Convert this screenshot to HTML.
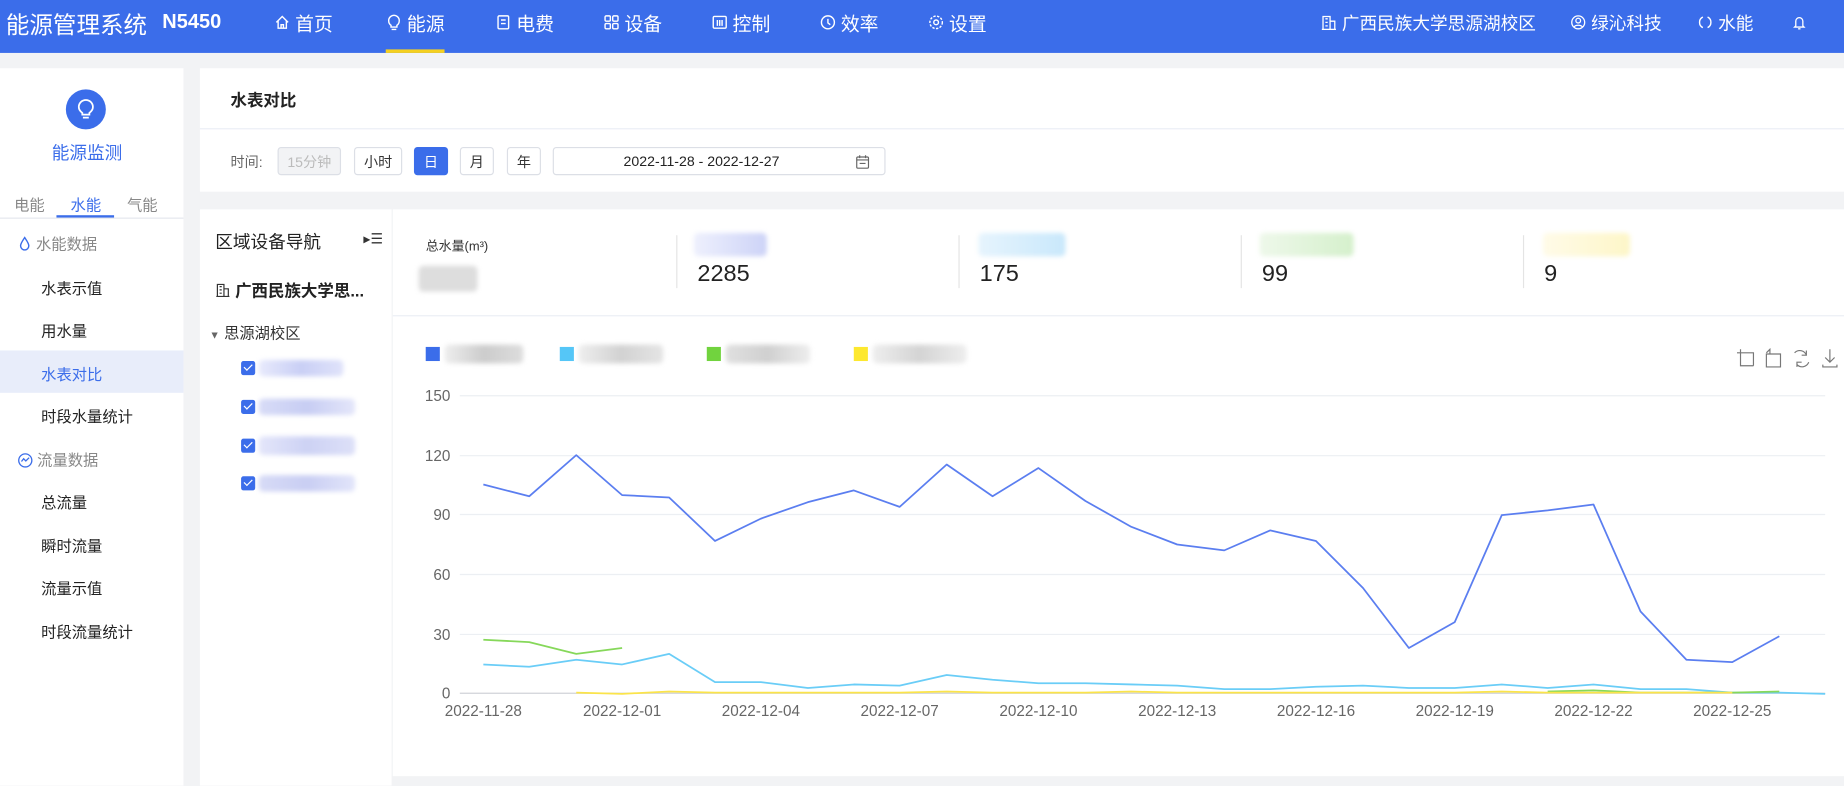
<!DOCTYPE html>
<html><head><meta charset="utf-8">
<style>
*{margin:0;padding:0;box-sizing:border-box}
html,body{width:1844px;height:786px;overflow:hidden;background:#f2f3f5}
body{font-family:"Liberation Sans","Noto Sans CJK SC",sans-serif;color:#333}
#w{position:absolute;left:0;top:0;width:1568px;height:668px;transform:scale(1.17602);transform-origin:0 0;background:#f2f3f5}
.a{position:absolute;white-space:nowrap}
.hd{position:absolute;left:0;top:0;width:1568px;height:45px;background:#3b6dea;color:#fff}
.nav{position:absolute;top:0;height:38px;font-size:16px;color:#fff;display:flex;align-items:center;gap:4px;white-space:nowrap}
.nav svg{width:14px;height:14px}
.card{position:absolute;background:#fff}
.menu{position:absolute;left:35px;font-size:13px;color:#222}
.btn{position:absolute;top:125px;height:24px;border:1px solid #dcdfe6;border-radius:3px;font-size:12px;display:flex;align-items:center;justify-content:center;color:#333;background:#fff}
.blur{position:absolute;filter:blur(2px);border-radius:4px}
.cb{position:absolute;left:205px;width:12px;height:12px;background:#3b6dea;border-radius:2px}
.cb:after{content:"";position:absolute;left:3.5px;top:1px;width:3px;height:6px;border:solid #fff;border-width:0 1.5px 1.5px 0;transform:rotate(45deg)}
.yl{position:absolute;right:1185px;font-size:13px;color:#666;width:40px;text-align:right}
.xl{position:absolute;top:597px;font-size:13px;color:#666;width:90px;text-align:center}
</style></head><body><div id="w">
<div class="hd">
 <div class="nav" style="left:5px;font-size:20px;">能源管理系统</div>
 <div class="nav" style="left:138px;font-size:17px;font-weight:bold">N5450</div>
 <div class="nav" style="left:233px"><svg viewBox="0 0 14 14" fill="none" stroke="#fff" stroke-width="1.2"><path d="M2 7L7 2l5 5M3.5 6v6h7V6M6 12V9h2v3"/></svg>首页</div>
 <div class="nav" style="left:328px"><svg viewBox="0 0 14 14" fill="none" stroke="#fff" stroke-width="1.2"><path d="M4.5 9.5C3 8.5 2.5 7 2.5 5.5a4.5 4.5 0 0 1 9 0c0 1.5-.5 3-2 4v1.5h-5zM5 13h4"/></svg>能源</div>
 <div class="a" style="left:328px;top:42px;width:50px;height:3px;background:#f5d020"></div>
 <div class="nav" style="left:421px"><svg viewBox="0 0 14 14" fill="none" stroke="#fff" stroke-width="1.2"><rect x="2.5" y="1.5" width="9" height="11" rx="1"/><path d="M5 5h4M5 8h4"/></svg>电费</div>
 <div class="nav" style="left:513px"><svg viewBox="0 0 14 14" fill="none" stroke="#fff" stroke-width="1.2"><rect x="1.5" y="1.5" width="4.5" height="4.5" rx="1"/><rect x="8" y="1.5" width="4.5" height="4.5" rx="1"/><rect x="1.5" y="8" width="4.5" height="4.5" rx="1"/><rect x="8" y="8" width="4.5" height="4.5" rx="1"/></svg>设备</div>
 <div class="nav" style="left:605px"><svg viewBox="0 0 14 14" fill="none" stroke="#fff" stroke-width="1.2"><rect x="1.5" y="2" width="11" height="10" rx="1"/><path d="M5 5v5M7 5v5M9 5v5"/></svg>控制</div>
 <div class="nav" style="left:697px"><svg viewBox="0 0 14 14" fill="none" stroke="#fff" stroke-width="1.2"><circle cx="7" cy="7" r="5.5"/><path d="M7 4v3.5l2 1.5"/></svg>效率</div>
 <div class="nav" style="left:789px"><svg viewBox="0 0 14 14" fill="none" stroke="#fff" stroke-width="1.2"><circle cx="7" cy="7" r="2"/><circle cx="7" cy="7" r="5.3" stroke-dasharray="2 1.2"/></svg>设置</div>
 <div class="nav" style="left:1123px;font-size:15px"><svg viewBox="0 0 14 14" fill="none" stroke="#fff" stroke-width="1.1"><path d="M2 13V2h6v11M8 6h4v7M1 13h12M4 4h2M4 7h2M4 10h2"/></svg>广西民族大学思源湖校区</div>
 <div class="nav" style="left:1335px;font-size:15px"><svg viewBox="0 0 14 14" fill="none" stroke="#fff" stroke-width="1.1"><circle cx="7" cy="7" r="5.5"/><circle cx="7" cy="5.5" r="2"/><path d="M3.5 11c1-2 6-2 7 0"/></svg>绿沁科技</div>
 <div class="nav" style="left:1443px;font-size:15px"><svg viewBox="0 0 14 14" fill="none" stroke="#fff" stroke-width="1.2"><path d="M5 2.5A5 5 0 0 0 5 11.5M9 2.5a5 5 0 0 1 0 9"/></svg>水能</div>
 <div class="nav" style="left:1523px"><svg viewBox="0 0 14 14" fill="none" stroke="#fff" stroke-width="1.1"><path d="M4 10V6a3 3 0 0 1 6 0v4l1 1H3zM6 12.5h2"/></svg></div>
</div>
<!-- sidebar -->
<div class="card" style="left:0;top:58px;width:156px;height:610px">
 <div class="a" style="left:56px;top:18px;width:34px;height:34px;border-radius:50%;background:#3b6dea"><svg style="position:absolute;left:9px;top:8px" width="16" height="18" viewBox="0 0 16 18" fill="none" stroke="#fff" stroke-width="1.5"><path d="M5 12C3 10.5 2 9 2 7a6 6 0 0 1 12 0c0 2-1 3.5-3 5v1.5H5zM5.5 16h5"/></svg></div>
 <div class="a" style="left:44px;top:61px;font-size:15px;color:#3b6dea">能源监测</div>
 <div class="a" style="left:12px;top:106px;font-size:13px;color:#888">电能</div>
 <div class="a" style="left:60px;top:106px;font-size:13px;color:#3b6dea">水能</div>
 <div class="a" style="left:108px;top:106px;font-size:13px;color:#888">气能</div>
 <div class="a" style="left:0;top:127px;width:156px;height:1px;background:#e4e7ed"></div>
 <div class="a" style="left:48px;top:125px;width:49px;height:2px;background:#3b6dea"></div>
 <div class="a" style="left:15px;top:139px;font-size:13px;color:#888"><svg width="12" height="13" viewBox="0 0 12 13" style="vertical-align:-2px" fill="none" stroke="#3b6dea" stroke-width="1.2"><path d="M6 1C4 4 2.5 6 2.5 8a3.5 3.5 0 0 0 7 0C9.5 6 8 4 6 1z"/></svg> 水能数据</div>
 <div class="a" style="left:0;top:240px;width:156px;height:36px;background:#e8edfa"></div>
 <div class="menu" style="top:177px">水表示值</div>
 <div class="menu" style="top:213px">用水量</div>
 <div class="menu" style="top:250px;color:#3b6dea">水表对比</div>
 <div class="menu" style="top:286px">时段水量统计</div>
 <div class="a" style="left:15px;top:323px;font-size:13px;color:#888"><svg width="13" height="13" viewBox="0 0 14 14" style="vertical-align:-2px" fill="none" stroke="#3b6dea" stroke-width="1.2"><circle cx="7" cy="7" r="6"/><path d="M3.5 8l2-2.5 2 2 3-3"/></svg> 流量数据</div>
 <div class="menu" style="top:359px">总流量</div>
 <div class="menu" style="top:396px">瞬时流量</div>
 <div class="menu" style="top:432px">流量示值</div>
 <div class="menu" style="top:469px">时段流量统计</div>
</div>
<!-- top card -->
<div class="card" style="left:170px;top:58px;width:1398px;height:105px">
 <div class="a" style="left:26px;top:17px;font-size:14px;font-weight:bold;color:#222">水表对比</div>
 <div class="a" style="left:0;top:51px;width:1398px;height:1px;background:#ebeef5"></div>
 <div class="a" style="left:26px;top:71px;font-size:12px;color:#666">时间:</div>
</div>
<div class="btn" style="left:236px;width:54px;background:#f2f3f5;color:#bbb">15分钟</div>
<div class="btn" style="left:301px;width:41px">小时</div>
<div class="btn" style="left:352px;width:29px;background:#3b6dea;border-color:#3b6dea;color:#fff">日</div>
<div class="btn" style="left:391px;width:29px">月</div>
<div class="btn" style="left:431px;width:29px">年</div>
<div class="btn" style="left:470px;width:283px;font-size:12px;color:#222"><span style="margin-left:-30px">2022-11-28 - 2022-12-27</span><svg style="position:absolute;right:12px;top:5px" width="13" height="13" viewBox="0 0 13 13" fill="none" stroke="#666"><rect x="1.5" y="2.5" width="10" height="9.5" rx="1"/><path d="M1.5 5h10M4 1v2.5M9 1v2.5M4 8h5"/></svg></div>
<!-- nav panel -->
<div class="card" style="left:170px;top:178px;width:163px;height:490px">
 <div class="a" style="left:13px;top:17px;font-size:15px;color:#222">区域设备导航</div>
 <div class="a" style="left:139px;top:18px;font-size:12px;color:#333">▸☰</div>
 <div class="a" style="left:13px;top:59px;font-size:14px;font-weight:bold;color:#222"><svg width="13" height="13" viewBox="0 0 14 14" style="vertical-align:-1px" fill="none" stroke="#333" stroke-width="1.1"><path d="M2 13V2h6v11M8 6h4v7M1 13h12M4 4h2M4 7h2M4 10h2"/></svg> 广西民族大学思...</div>
 <div class="a" style="left:8px;top:95px;font-size:13px;color:#333"><span style="font-size:9px;color:#666">▼</span> 思源湖校区</div>
</div>
<div class="cb" style="top:307px"></div><div class="blur" style="left:220px;top:306px;width:72px;height:14px;background:linear-gradient(90deg,#e8eafc,#c9cff5,#e0e3fa)"></div>
<div class="cb" style="top:340px"></div><div class="blur" style="left:220px;top:339px;width:82px;height:14px;background:linear-gradient(90deg,#d8dcf7,#c7cdf3,#e4e6fa)"></div>
<div class="cb" style="top:373px"></div><div class="blur" style="left:220px;top:371px;width:82px;height:16px;background:linear-gradient(90deg,#e4e6fa,#cdd2f4,#dde0f8)"></div>
<div class="cb" style="top:405px"></div><div class="blur" style="left:220px;top:404px;width:82px;height:14px;background:linear-gradient(90deg,#d7dbf6,#c9cef3,#e2e5fa)"></div>
<!-- chart panel -->
<div class="card" style="left:334px;top:178px;width:1234px;height:482px">
 <div class="a" style="left:28px;top:23px;font-size:11px;color:#333">总水量(m³)</div>
 <div class="blur" style="left:22px;top:48px;width:50px;height:22px;background:#ddd"></div>
 <div class="a" style="left:241px;top:22px;width:1px;height:45px;background:#e4e4e4"></div>
 <div class="a" style="left:481px;top:22px;width:1px;height:45px;background:#e4e4e4"></div>
 <div class="a" style="left:721px;top:22px;width:1px;height:45px;background:#e4e4e4"></div>
 <div class="a" style="left:961px;top:22px;width:1px;height:45px;background:#e4e4e4"></div>
 <div class="blur" style="left:256px;top:20px;width:62px;height:20px;background:linear-gradient(90deg,#eef0fd,#cdd3f7)"></div>
 <div class="blur" style="left:498px;top:20px;width:74px;height:20px;background:linear-gradient(90deg,#e6f4fd,#c9e8fb)"></div>
 <div class="blur" style="left:737px;top:20px;width:80px;height:20px;background:linear-gradient(90deg,#eef8ea,#d5f0cc)"></div>
 <div class="blur" style="left:978px;top:20px;width:74px;height:20px;background:linear-gradient(90deg,#fffbe8,#fdf6c8)"></div>
 <div class="a" style="left:259px;top:44px;font-size:20px;color:#222">2285</div>
 <div class="a" style="left:499px;top:44px;font-size:20px;color:#222">175</div>
 <div class="a" style="left:739px;top:44px;font-size:20px;color:#222">99</div>
 <div class="a" style="left:979px;top:44px;font-size:20px;color:#222">9</div>
 <div class="a" style="left:0;top:90px;width:1234px;height:1px;background:#ebeef5"></div>
</div>
<div class="a" style="left:362px;top:295px;width:12px;height:12px;background:#3b6dea"></div><div class="blur" style="left:378px;top:293px;width:67px;height:16px;background:linear-gradient(90deg,#eee,#ccc,#ddd)"></div>
<div class="a" style="left:476px;top:295px;width:12px;height:12px;background:#55c6f7"></div><div class="blur" style="left:492px;top:293px;width:72px;height:16px;background:linear-gradient(90deg,#eee,#d2d2d2,#e5e5e5)"></div>
<div class="a" style="left:601px;top:295px;width:12px;height:12px;background:#71d33e"></div><div class="blur" style="left:617px;top:293px;width:72px;height:16px;background:linear-gradient(90deg,#e0e0e0,#d0d0d0,#eee)"></div>
<div class="a" style="left:726px;top:295px;width:12px;height:12px;background:#fde82f"></div><div class="blur" style="left:742px;top:293px;width:80px;height:16px;background:linear-gradient(90deg,#eee,#d4d4d4,#eee)"></div>
<svg class="a" style="left:1476px;top:296px" width="90" height="18" viewBox="0 0 90 18" fill="none" stroke="#777" stroke-width="1"><path d="M4 1v14h11M1 4h14v11"/><path d="M26 16V5h12v11zM29 5V1l-3 3"/><path d="M50 4a6 6 0 0 1 10 2M62 12a6 6 0 0 1-10 2M60 2v4h-4M52 16v-4h4"/><path d="M80 1v11M76 8l4 4 4-4M74 14v2h12v-2"/></svg>
<!-- chart -->
<div class="yl" style="top:329px">150</div><div class="yl" style="top:380px">120</div><div class="yl" style="top:430px">90</div><div class="yl" style="top:481px">60</div><div class="yl" style="top:532px">30</div><div class="yl" style="top:582px">0</div>
<svg class="a" style="left:0;top:0" width="1568" height="668">
<g stroke="#eceff3" stroke-width="1"><path d="M391 336.5H1552M391 387.5H1552M391 437.5H1552M391 488.5H1552M391 539.5H1552"/></g>
<path d="M391 589.5H1552" stroke="#d0d3d8"/>
<g fill="none" stroke-width="1.5" stroke-linejoin="round">
<polyline stroke="#5b7ef0" points="411,412 450,422 490,387 529,421 569,423 608,460 647,441 687,427 726,417 765,431 805,395 844,422 883,398 923,426 962,448 1001,463 1041,468 1080,451 1119,460 1159,500 1198,551 1237,529 1277,438 1316,434 1355,429 1395,520 1434,561 1473,563 1513,541"/>
<polyline stroke="#6acdf7" points="411,565 450,567 490,561 529,565 569,556 608,580 647,580 687,585 726,582 765,583 805,574 844,578 883,581 923,581 962,582 1001,583 1041,586 1080,586 1119,584 1159,583 1198,585 1237,585 1277,582 1316,585 1355,582 1395,586 1434,586 1473,589 1513,589 1552,590"/>
<polyline stroke="#86d85a" points="411,544 450,546 490,556 529,551"/>
<polyline stroke="#86d85a" points="1316,588 1355,587 1395,589 1434,589 1473,589 1513,588"/>
<polyline stroke="#fbe44a" points="490,589 529,590 569,588 608,589 647,589 687,589 726,589 765,589 805,588 844,589 883,589 923,589 962,588 1001,589 1041,589 1080,589 1119,589 1159,589 1198,589 1237,589 1277,588 1316,589 1355,589 1395,589 1434,589 1473,589"/>
</g></svg>
<div class="xl" style="left:366px">2022-11-28</div><div class="xl" style="left:484px">2022-12-01</div><div class="xl" style="left:602px">2022-12-04</div><div class="xl" style="left:720px">2022-12-07</div><div class="xl" style="left:838px">2022-12-10</div><div class="xl" style="left:956px">2022-12-13</div><div class="xl" style="left:1074px">2022-12-16</div><div class="xl" style="left:1192px">2022-12-19</div><div class="xl" style="left:1310px">2022-12-22</div><div class="xl" style="left:1428px">2022-12-25</div>
</div></body></html>
